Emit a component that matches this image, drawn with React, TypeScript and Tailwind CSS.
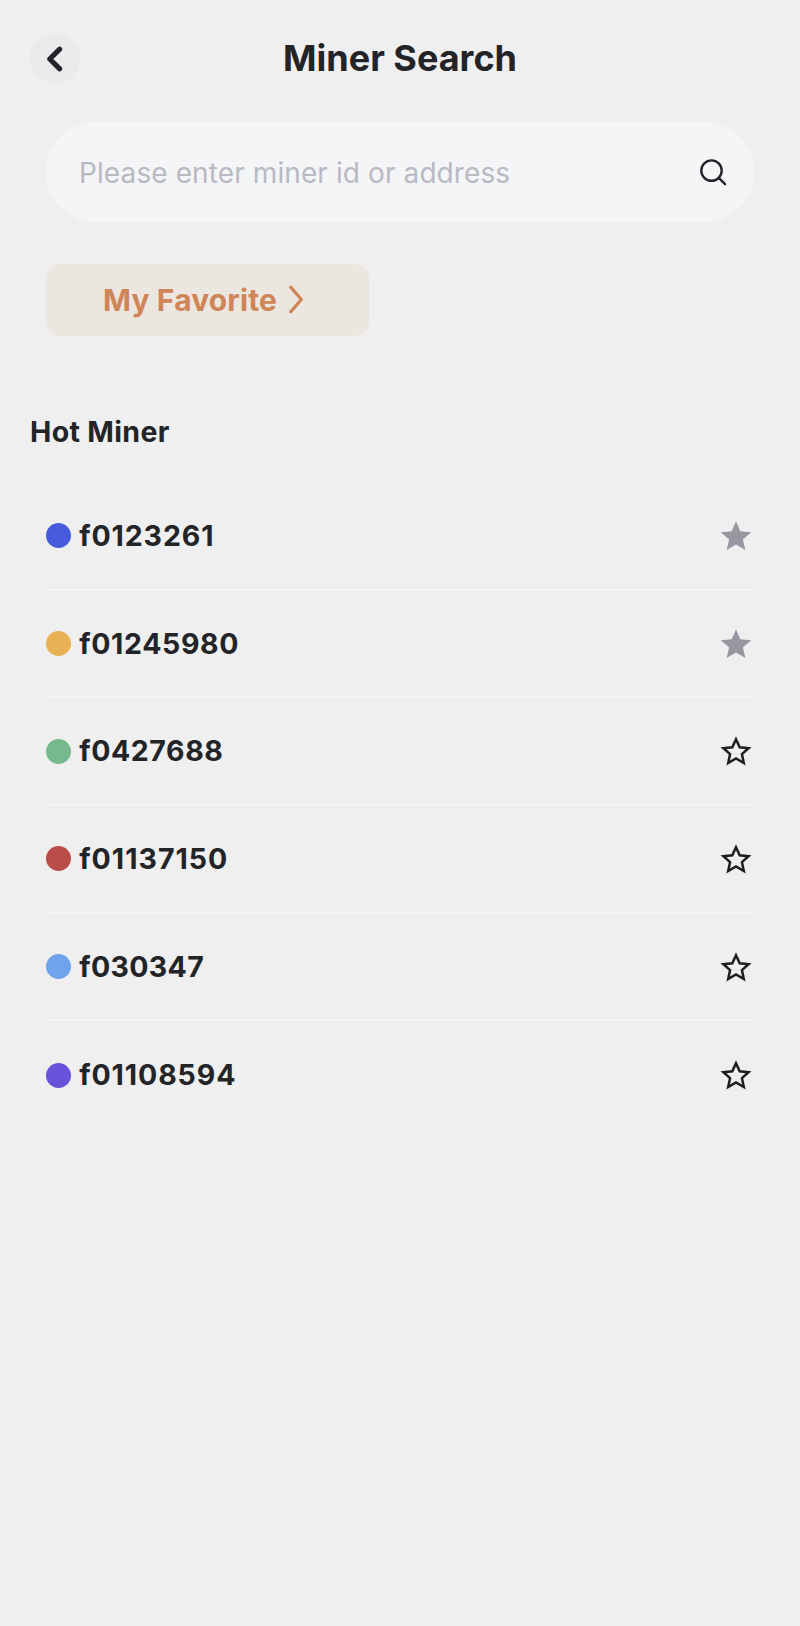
type Miner = {
  id: string;
  dot: string;
  tracking: string;
  favorite: boolean;
};

const miners: Miner[] = [
  { id: 'f0123261', dot: 'bg-[#465cdc]', tracking: 'tracking-[0.9px]', favorite: true },
  { id: 'f01245980', dot: 'bg-[#e8b154]', tracking: 'tracking-[0.65px]', favorite: true },
  { id: 'f0427688', dot: 'bg-[#75b98c]', tracking: 'tracking-[0.6px]', favorite: false },
  { id: 'f01137150', dot: 'bg-[#ba4c4a]', tracking: 'tracking-[1.04px]', favorite: false },
  { id: 'f030347', dot: 'bg-[#6fa3ec]', tracking: 'tracking-[0.35px]', favorite: false },
  { id: 'f01108594', dot: 'bg-[#6753d9]', tracking: 'tracking-[0.92px]', favorite: false },
];

function Star({ filled }: { filled: boolean }) {
  return filled ? (
    <svg className="mt-[3px] mr-[2px] size-8 text-[#96979f]" viewBox="-16 -16 32 32" fill="currentColor">
      <path d="M0-15.6L4.3-5.7L15.2-4.7L6.9 2.4L9.4 13.1L0 7.5L-9.4 13.1L-6.9 2.4L-15.2-4.7L-4.3-5.7Z" />
    </svg>
  ) : (
    <svg className="mt-[2px] mr-[2px] size-8 text-[#1d1e20]" viewBox="-16 -16 32 32" fill="none" stroke="currentColor" strokeWidth="2.5">
      <path d="M0-12.8L3.7-4.7L12.6-3.8L5.9 2.1L7.8 11L0 6.4L-7.8 11L-5.9 2.1L-12.6-3.8L-3.7-4.7Z" />
    </svg>
  );
}

export default function App() {
  return (
    <main className="flex h-[1626px] w-full flex-col bg-[#efefef] font-['Inter',sans-serif] text-[#222427]">
      <header className="grid h-[122px] grid-cols-[1fr_auto_1fr] items-start px-[30px] pt-[33px]">
        <button aria-label="Back" className="flex size-[50px] items-center justify-center rounded-full bg-[#e8eaec]">
          <svg className="size-[50px]" viewBox="0 0 50 50" fill="none" stroke="currentColor" strokeWidth="5.2" strokeLinecap="round" strokeLinejoin="round">
            <path d="M29.7 16.2L19.7 26L29.7 35.8" />
          </svg>
        </button>
        <h1 className="text-[36px] leading-[50px] font-bold">Miner Search</h1>
      </header>

      <div className="mx-[46px] flex h-[100px] shrink-0 items-center justify-between rounded-full bg-[#f4f5f7] pr-[25px] pl-[33px]">
        <span className="pt-[2px] text-[28px] tracking-[0.1px] text-[#b8b9c2]">Please enter miner id or address</span>
        <svg className="size-8" viewBox="0 0 32 32" fill="none" stroke="currentColor" strokeWidth="2.4" strokeLinecap="round">
          <circle cx="14.5" cy="14.6" r="10.2" />
          <path d="M22 22.2L28 28.2" />
        </svg>
      </div>

      <button className="mt-[42px] ml-[46px] flex h-[72px] w-[323px] shrink-0 items-center rounded-[14px] bg-[#ebe6df] pl-[57px] text-[#d08558]">
        <span className="text-[30px] font-bold tracking-[0.15px]">My Favorite</span>
        <svg className="ml-2 h-[30px] w-5" viewBox="0 0 20 30" fill="none" stroke="currentColor" strokeWidth="3.3" strokeLinecap="round" strokeLinejoin="round">
          <path d="M5.8 2.2L16.3 14.5L5.8 26.8" />
        </svg>
      </button>

      <h2 className="mt-[76px] ml-[30px] text-[28.5px] leading-[40px] font-bold tracking-[0.35px]">Hot Miner</h2>

      <ul className="mx-[46px] mt-[31px] flex flex-col">
        {miners.map((miner, index) => (
          <li
            key={miner.id}
            className={`flex h-[107.7px] items-center ${index < miners.length - 1 ? 'border-b-2 border-[#f5f5f5]' : ''}`}
          >
            <span className={`-ml-[0.5px] size-[25px] rounded-full ${miner.dot}`} />
            <span className={`ml-[8.7px] grow text-[28.5px] leading-[40px] font-bold ${miner.tracking}`}>{miner.id}</span>
            <Star filled={miner.favorite} />
          </li>
        ))}
      </ul>
    </main>
  );
}
